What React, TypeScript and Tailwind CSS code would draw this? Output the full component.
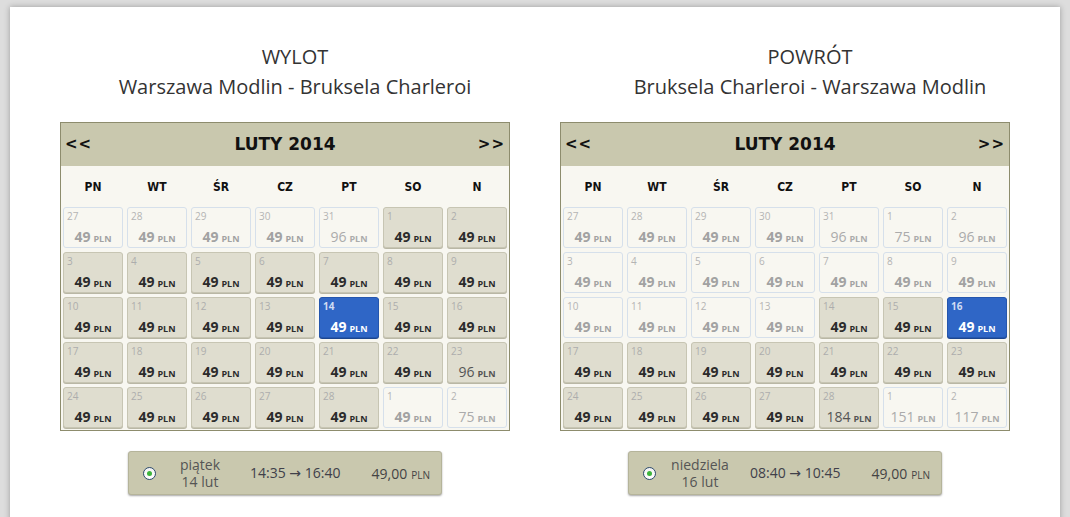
import React from 'react';

type Kind = 'e' | 'a' | 's';
type Day = { d: number; p: number; k: Kind };

const dayNames = ['PN', 'WT', 'ŚR', 'CZ', 'PT', 'SO', 'N'];

const mk = (list: [number, number, Kind][]): Day[] => list.map(([d, p, k]) => ({ d, p, k }));

const outbound: Day[] = mk([
  [27, 49, 'e'], [28, 49, 'e'], [29, 49, 'e'], [30, 49, 'e'], [31, 96, 'e'], [1, 49, 'a'], [2, 49, 'a'],
  [3, 49, 'a'], [4, 49, 'a'], [5, 49, 'a'], [6, 49, 'a'], [7, 49, 'a'], [8, 49, 'a'], [9, 49, 'a'],
  [10, 49, 'a'], [11, 49, 'a'], [12, 49, 'a'], [13, 49, 'a'], [14, 49, 's'], [15, 49, 'a'], [16, 49, 'a'],
  [17, 49, 'a'], [18, 49, 'a'], [19, 49, 'a'], [20, 49, 'a'], [21, 49, 'a'], [22, 49, 'a'], [23, 96, 'a'],
  [24, 49, 'a'], [25, 49, 'a'], [26, 49, 'a'], [27, 49, 'a'], [28, 49, 'a'], [1, 49, 'e'], [2, 75, 'e'],
]);

const inbound: Day[] = mk([
  [27, 49, 'e'], [28, 49, 'e'], [29, 49, 'e'], [30, 49, 'e'], [31, 96, 'e'], [1, 75, 'e'], [2, 96, 'e'],
  [3, 49, 'e'], [4, 49, 'e'], [5, 49, 'e'], [6, 49, 'e'], [7, 49, 'e'], [8, 49, 'e'], [9, 49, 'e'],
  [10, 49, 'e'], [11, 49, 'e'], [12, 49, 'e'], [13, 49, 'e'], [14, 49, 'a'], [15, 49, 'a'], [16, 49, 's'],
  [17, 49, 'a'], [18, 49, 'a'], [19, 49, 'a'], [20, 49, 'a'], [21, 49, 'a'], [22, 49, 'a'], [23, 49, 'a'],
  [24, 49, 'a'], [25, 49, 'a'], [26, 49, 'a'], [27, 49, 'a'], [28, 184, 'a'], [1, 151, 'e'], [2, 117, 'e'],
]);

const DayCell: React.FC<{ day: Day }> = ({ day }) => {
  const cheap = day.p === 49;
  let box = 'bg-[#f8f7f1] border-[#d6e0eb]';
  let num = 'text-[#b4b4b4]';
  let price = cheap ? 'font-bold text-[#a2a2a2]' : 'text-[#ababab]';
  if (day.k === 'a') {
    box = 'bg-[#dfddcf] border-[#c7c5b3] shadow-[0_1px_0_#b9b7a5]';
    num = 'text-[#adadad]';
    price = cheap ? 'font-bold text-[#2b2b2b]' : 'text-[#555555]';
  }
  if (day.k === 's') {
    box = 'bg-[#2f66c6] border-[#2556ad] shadow-[0_1px_0_#1d468f]';
    num = 'font-bold text-[#cfdcf3]';
    price = 'font-bold text-white';
  }
  return (
    <div className={`h-[41px] rounded-[3px] border flex flex-col ${box}`}>
      <div className={`pl-[3px] pt-[2px] text-[10px] leading-[12px] ${num}`}>{day.d}</div>
      <div className={`mt-[7px] text-center text-[14px] leading-[16px] ${price}`}>
        {day.p}
        <span className="ml-[3px] text-[9px] font-bold">PLN</span>
      </div>
    </div>
  );
};

const Calendar: React.FC<{ days: Day[] }> = ({ days }) => (
  <div className="w-[450px] border border-[#8d8c6d] bg-[#f8f7f1]">
    <div className="h-[43px] bg-[#c9c8ae] flex items-center justify-between px-[4px] font-['DejaVu_Sans',sans-serif] font-bold text-[#111]">
      <span className="text-[15px] tracking-[1px]">&lt;&lt;</span>
      <span className="text-[17px]">LUTY 2014</span>
      <span className="text-[15px] tracking-[1px]">&gt;&gt;</span>
    </div>
    <div className="h-[41px] grid grid-cols-7 gap-[4px] px-[2px] items-center font-['DejaVu_Sans_Condensed','DejaVu_Sans',sans-serif] font-bold text-[12px] text-[#111]">
      {dayNames.map((n) => (
        <div key={n} className="text-center">{n}</div>
      ))}
    </div>
    <div className="grid grid-cols-7 gap-[4px] px-[2px] pb-[2px]">
      {days.map((d, i) => (
        <DayCell key={i} day={d} />
      ))}
    </div>
  </div>
);

const Radio: React.FC = () => (
  <div className="w-[13px] h-[13px] rounded-full border-[1.5px] border-[#2c4a6e] bg-gradient-to-b from-[#f2f2f2] to-white flex items-center justify-center">
    <div className="w-[5px] h-[5px] rounded-full bg-[#3cb43c]" />
  </div>
);

const FlightBar: React.FC<{ dayName: string; date: string; dep: string; arr: string }> = ({ dayName, date, dep, arr }) => (
  <div className="w-[314px] h-[44px] rounded-[3px] bg-[#c9c8ae] border border-[#b5b49a] shadow-[0_1px_2px_rgba(0,0,0,0.35)] flex items-center pl-[14px] pr-[11px] text-[#464646] text-[14px]">
    <Radio />
    <div className="w-[74px] ml-[7px] text-center leading-[17px] text-[#555]">
      <div>{dayName}</div>
      <div>{date}</div>
    </div>
    <div className="ml-[13px] whitespace-nowrap text-[#40404a]">
      {dep} <span className="font-['DejaVu_Sans',sans-serif] text-[14px]">→</span> {arr}
    </div>
    <div className="ml-auto text-[#444] whitespace-nowrap">
      49,00<span className="ml-[4px] text-[10px]">PLN</span>
    </div>
  </div>
);

const Column: React.FC<{
  title: string;
  route: string;
  shift: string;
  days: Day[];
  dayName: string;
  date: string;
  dep: string;
  arr: string;
}> = ({ title, route, shift, days, dayName, date, dep, arr }) => (
  <div className="w-[450px] flex flex-col items-center">
    <div className={`w-full text-center text-[20px] leading-[30px] text-[#333] whitespace-nowrap ${shift}`}>
      <div>{title}</div>
      <div>{route}</div>
    </div>
    <div className="mt-[20px]">
      <Calendar days={days} />
    </div>
    <div className="mt-[20px]">
      <FlightBar dayName={dayName} date={date} dep={dep} arr={arr} />
    </div>
  </div>
);

export default function App() {
  return (
    <div className="min-h-[517px] bg-[#dddddd] pt-[7px] px-[10px] overflow-hidden font-['Open_Sans',sans-serif]">
      <div className="w-[1050px] min-h-[530px] bg-white shadow-[0_0_6px_rgba(0,0,0,0.3)] pt-[35px] px-[50px] pb-[30px] flex gap-[50px]">
        <Column
          title="WYLOT"
          route="Warszawa Modlin - Bruksela Charleroi"
          shift="pl-[20px]"
          days={outbound}
          dayName="piątek"
          date="14 lut"
          dep="14:35"
          arr="16:40"
        />
        <Column
          title="POWRÓT"
          route="Bruksela Charleroi - Warszawa Modlin"
          shift="pl-[50px]"
          days={inbound}
          dayName="niedziela"
          date="16 lut"
          dep="08:40"
          arr="10:45"
        />
      </div>
    </div>
  );
}
